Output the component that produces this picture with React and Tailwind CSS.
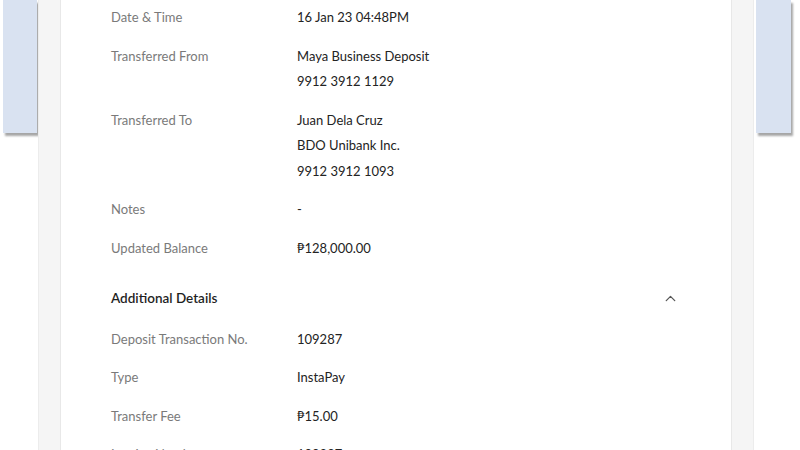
import { ChevronUp } from "lucide-react";

const rows = [
  { label: "Date & Time", values: ["16 Jan 23 04:48PM"] },
  { label: "Transferred From", values: ["Maya Business Deposit", "9912 3912 1129"] },
  { label: "Transferred To", values: ["Juan Dela Cruz", "BDO Unibank Inc.", "9912 3912 1093"] },
  { label: "Notes", values: ["-"] },
  { label: "Updated Balance", values: ["₱128,000.00"] },
];

const extra = [
  { label: "Deposit Transaction No.", values: ["109287"] },
  { label: "Type", values: ["InstaPay"] },
  { label: "Transfer Fee", values: ["₱15.00"] },
  { label: "Invoice Number", values: ["109287"] },
];

function Row({ label, values }) {
  return (
    <div className="flex">
      <div className="w-[186px] shrink-0 leading-[25.5px] text-[#7a7a7a]">{label}</div>
      <div className="flex flex-col text-[#232323]">
        {values.map((v) => (
          <div key={v} className="leading-[25.5px]">{v}</div>
        ))}
      </div>
    </div>
  );
}

export default function App() {
  return (
    <div
      className="w-[800px] h-[450px] overflow-hidden bg-white flex text-[13px]"
      style={{ fontFamily: "Lato, 'Noto Sans', sans-serif" }}
    >
      {/* page behind the sheet */}
      <div className="ml-[3px] w-[34px] h-[133px] shrink-0 bg-[#d9e2f1] shadow-[2px_3px_2px_rgba(0,0,0,0.35)]" />
      <div className="ml-[1px] w-[22px] shrink-0 h-full bg-[#f5f5f5] border-l border-[#ececec]" />

      {/* sheet */}
      <div className="w-[672px] shrink-0 h-full bg-white border-x border-[#e8e8e8] pl-[50px] pr-[52px] pt-[5px]">
        <div className="flex flex-col gap-[13px]">
          {rows.map((r) => (
            <Row key={r.label} {...r} />
          ))}
        </div>

        <div className="mt-[25px] mb-[15px] flex items-center justify-between leading-[25.5px]">
          <span className="font-semibold text-[13.5px] text-[#1f1f1f]">Additional Details</span>
          <ChevronUp size={17} strokeWidth={1.8} className="text-[#555]" />
        </div>

        <div className="flex flex-col gap-[13px]">
          {extra.map((r) => (
            <Row key={r.label} {...r} />
          ))}
        </div>
      </div>

      <div className="w-[22px] shrink-0 h-full bg-[#f5f5f5] border-r border-[#ececec]" />
      <div className="ml-[2px] w-[35px] h-[133px] shrink-0 bg-[#d9e2f1] shadow-[2px_3px_2px_rgba(0,0,0,0.35)]" />
    </div>
  );
}
